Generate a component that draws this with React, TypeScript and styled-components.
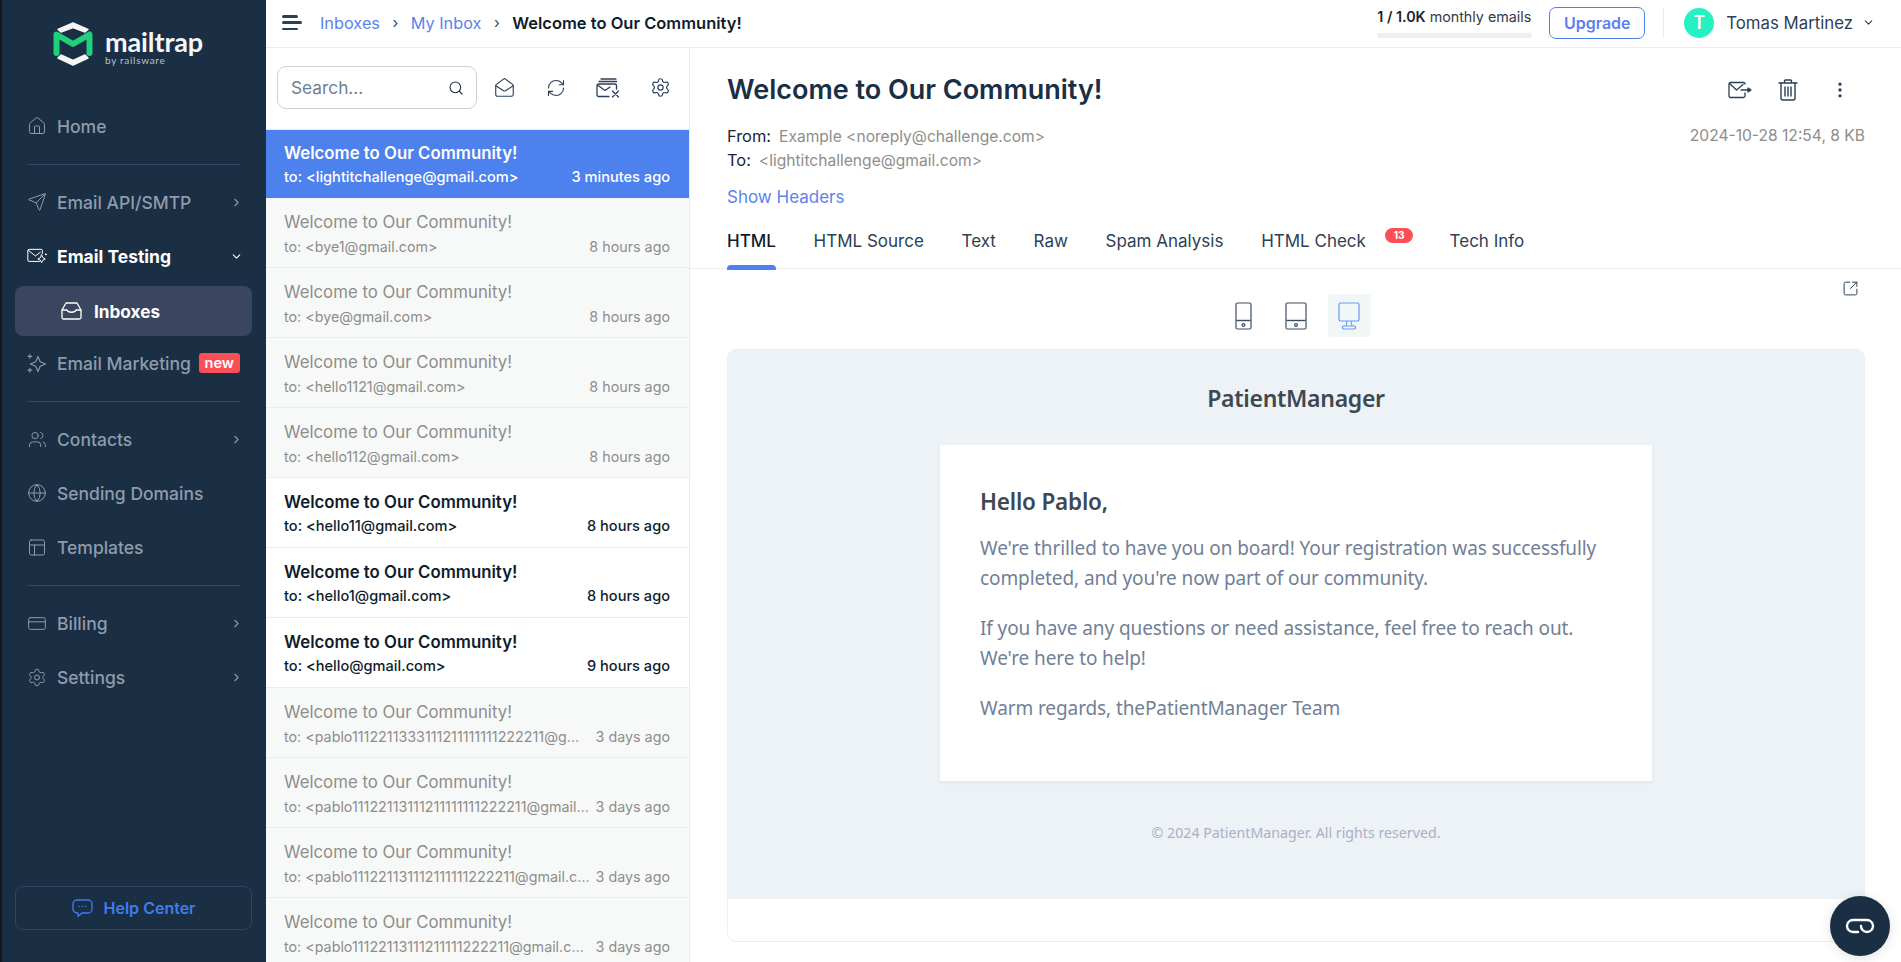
import React from "react";
import styled, { createGlobalStyle } from "styled-components";
import {
  ChevronDown,
  ChevronRight,
  CreditCard,
  EllipsisVertical,
  Globe,
  House,
  MailOpen,
  PanelsTopLeft,
  RefreshCw,
  Search,
  Send,
  Settings,
  SquareArrowOutUpRight,
  Users,
} from "lucide-react";

const GlobalStyle = createGlobalStyle`
  html, body {
    margin: 0;
    padding: 0;
    height: 100%;
    overflow: hidden;
  }
  body {
    font-family: Inter, "Liberation Sans", sans-serif;
    background: #fff;
  }
  * {
    box-sizing: border-box;
  }
`;

const Shell = styled.div`
  display: flex;
  width: 100%;
  height: 100vh;
  padding-left: 2px;
  background: #14181d;
  overflow: hidden;
`;

const Sidebar = styled.aside`
  width: 264px;
  flex: none;
  display: flex;
  flex-direction: column;
  background: #1a2e44;
`;

const LogoRow = styled.div`
  height: 99px;
  flex: none;
  display: flex;
  align-items: flex-start;
  padding: 21px 0 0 50px;
  gap: 11px;
`;

const LogoText = styled.div`
  display: flex;
  flex-direction: column;
  color: #f4f6f8;
  padding-top: 9px;
`;

const LogoName = styled.span`
  font-family: Lato, sans-serif;
  font-size: 27px;
  line-height: 24px;
  font-weight: 700;
  letter-spacing: -0.1px;
`;

const LogoBy = styled.span`
  font-family: Lato, sans-serif;
  font-size: 10px;
  line-height: 12px;
  letter-spacing: 0.7px;
  color: #b9c2cc;
`;

const NavItem = styled.div<{ $active?: boolean }>`
  height: 54px;
  flex: none;
  display: flex;
  align-items: center;
  padding: 0 23px 0 25px;
  font-size: 17.5px;
  font-weight: ${(p) => (p.$active ? 700 : 500)};
  color: ${(p) => (p.$active ? "#fff" : "#8f9cab")};
`;

const NavIcon = styled.span`
  width: 20px;
  margin-right: 10px;
  display: flex;
  align-items: center;
  justify-content: center;
  flex: none;
`;

const NavLabel = styled.span`
  flex: 1;
  white-space: nowrap;
`;

const NewBadge = styled.span`
  background: #fb4f55;
  color: #fff;
  font-size: 14.5px;
  font-weight: 600;
  line-height: 20px;
  height: 20px;
  padding: 0 6px;
  margin-right: 3px;
  border-radius: 3px;
`;

const SubItem = styled.div`
  height: 50px;
  flex: none;
  margin: 3px 14px 0 13px;
  background: #3a465f;
  border-radius: 8px;
  display: flex;
  align-items: center;
  padding-left: 46px;
  gap: 12px;
  color: #fff;
  font-size: 17.2px;
  font-weight: 700;
`;

const NavDivider = styled.div`
  height: 1px;
  flex: none;
  margin: 11px 26px 10px 25px;
  background: #36465e;
`;

const HelpButton = styled.div`
  margin: auto 14px 32px 13px;
  height: 44px;
  flex: none;
  border: 1px solid #33445c;
  border-radius: 8px;
  display: flex;
  align-items: center;
  justify-content: center;
  gap: 11px;
  color: #3f7cf0;
  font-size: 16px;
  font-weight: 600;
`;

const Main = styled.div`
  flex: 1;
  min-width: 0;
  display: flex;
  flex-direction: column;
  background: #fff;
`;

const TopBar = styled.header`
  height: 48px;
  flex: none;
  display: flex;
  align-items: center;
  border-bottom: 1px solid #ececec;
  padding: 0 0 2px 16px;
`;

const Burger = styled.div`
  width: 20px;
  height: 15px;
  display: flex;
  flex-direction: column;
  justify-content: space-between;
  margin-right: 18px;
  span {
    display: block;
    height: 2.5px;
    background: #2a3f57;
    border-radius: 2px;
  }
  span:nth-child(2) {
    width: 20px;
  }
  span:nth-child(1),
  span:nth-child(3) {
    width: 16px;
  }
`;

const Crumbs = styled.nav`
  display: flex;
  align-items: center;
  font-size: 16.3px;
  color: #5c82ee;
  flex: 1;
`;

const CrumbSep = styled.span`
  margin: 0 12.5px;
  color: #38495c;
  font-size: 15px;
`;

const CrumbCurrent = styled.span`
  font-size: 16.5px;
  font-weight: 600;
  color: #0f1c2c;
`;

const Quota = styled.div`
  width: 155px;
  margin: 0 17px 3px 0;
  display: flex;
  flex-direction: column;
  font-size: 14.3px;
  line-height: 20px;
  padding-top: 2px;
  white-space: nowrap;
  color: #333a45;
  b {
    font-weight: 600;
    color: #1a2330;
  }
`;

const QuotaBar = styled.div`
  width: 155px;
  height: 5px;
  margin-top: 6px;
  border-radius: 3px;
  background: #eeeeee;
`;

const UpgradeButton = styled.div`
  width: 96px;
  height: 32px;
  border: 1px solid #4d81ee;
  border-radius: 7px;
  display: flex;
  align-items: center;
  justify-content: center;
  color: #5c7ff0;
  font-size: 16px;
  font-weight: 600;
`;

const TopDivider = styled.div`
  width: 1px;
  height: 30px;
  margin: 0 20px 0 18px;
  background: #ececec;
`;

const Avatar = styled.div`
  width: 30px;
  height: 30px;
  border-radius: 50%;
  background: #24f1c4;
  color: #fff;
  font-size: 18px;
  font-weight: 600;
  display: flex;
  align-items: center;
  justify-content: center;
`;

const UserName = styled.span`
  margin: 0 9px 0 12px;
  font-size: 16.8px;
  color: #2c3f55;
  white-space: nowrap;
`;

const Body = styled.div`
  flex: 1;
  min-height: 0;
  display: flex;
`;

const ListPane = styled.section`
  width: 424px;
  flex: none;
  border-right: 1px solid #ececec;
  overflow: hidden;
`;

const ListTools = styled.div`
  height: 82px;
  display: flex;
  align-items: center;
  padding: 0 0 2px 11px;
  border-bottom: 1px solid #ececec;
`;

const SearchBox = styled.div`
  width: 200px;
  height: 43px;
  flex: none;
  margin-right: 1px;
  border: 1px solid #d0d3d6;
  border-radius: 9px;
  display: flex;
  align-items: center;
  justify-content: space-between;
  padding: 0 12px 0 13px;
  font-size: 17.3px;
  color: #6d7f92;
`;

const ToolButton = styled.div`
  width: 52px;
  display: flex;
  justify-content: center;
  align-items: center;
  color: #2a3f57;
`;

const MessageRow = styled.div<{ $state: "active" | "unread" | "read" }>`
  height: ${(p) => (p.$state === "active" ? "68px" : "70px")};
  padding: ${(p) => (p.$state === "active" ? "12px" : "13px")} 19px 0 18px;
  border-bottom: 1px solid ${(p) => (p.$state === "active" ? "#4d81ee" : "#ececec")};
  background: ${(p) =>
    p.$state === "active" ? "#4d81ee" : p.$state === "read" ? "#f7f9f9" : "#fff"};
  color: ${(p) =>
    p.$state === "active" ? "#fff" : p.$state === "read" ? "#8f8d8a" : "#0f1c2c"};
`;

const MessageSubject = styled.div<{ $bold: boolean }>`
  font-size: 16.8px;
  line-height: 23px;
  font-weight: ${(p) => (p.$bold ? 600 : 400)};
  white-space: nowrap;
`;

const MessageMeta = styled.div<{ $bold: boolean }>`
  display: flex;
  justify-content: space-between;
  gap: 6px;
  margin-top: ${(p) => (p.$bold ? "1px" : "2px")};
  font-size: ${(p) => (p.$bold ? "14.6px" : "14.3px")};
  line-height: 22px;
  font-weight: ${(p) => (p.$bold ? 500 : 400)};
`;

const MessageTo = styled.span`
  flex: 1;
  min-width: 0;
  overflow: hidden;
  white-space: nowrap;
  text-overflow: ellipsis;
`;

const MessageTime = styled.span`
  flex: none;
`;

const DetailPane = styled.section`
  flex: 1;
  min-width: 0;
  display: flex;
  flex-direction: column;
`;

const DetailHead = styled.div`
  padding: 25px 36px 0 37px;
`;

const TitleRow = styled.div`
  display: flex;
  justify-content: space-between;
  align-items: center;
  height: 34px;
`;

const Title = styled.h1`
  margin: 0;
  font-size: 27px;
  line-height: 34px;
  font-weight: 600;
  color: #1a2e44;
`;

const TitleActions = styled.div`
  display: flex;
  align-items: center;
  color: #2a3f57;
  margin-right: 15px;
  gap: 26px;
  svg:nth-child(2) {
    margin-right: 6px;
  }
`;

const MetaRows = styled.div`
  display: flex;
  justify-content: space-between;
  margin-top: 17px;
  font-size: 16.4px;
  line-height: 24px;
  color: #1b2530;
`;

const MetaLine = styled.div`
  height: 24px;
  display: flex;
  align-items: baseline;
  gap: 8px;
`;

const MetaValue = styled.span`
  color: #8f8d8a;
  font-size: 15.6px;
`;

const MetaDate = styled.span`
  color: #8f8d8a;
  font-size: 15.6px;
`;

const ShowHeaders = styled.div`
  margin-top: 13px;
  font-size: 17px;
  line-height: 24px;
  color: #5c82ee;
`;

const Tabs = styled.div`
  display: flex;
  gap: 37.7px;
  height: 60px;
  padding: 0 0 0 37px;
  border-bottom: 1px solid #ececec;
  flex: none;
`;

const Tab = styled.div<{ $active?: boolean; $badged?: boolean }>`
  position: relative;
  height: 60px;
  padding-top: 20px;
  margin-right: ${(p) => (p.$badged ? "46px" : "0")};
  font-size: 17px;
  line-height: 24px;
  font-weight: ${(p) => (p.$active ? 500 : 400)};
  color: ${(p) => (p.$active ? "#0f1c2c" : "#2c3f55")};
  white-space: nowrap;
  &::after {
    content: "";
    display: ${(p) => (p.$active ? "block" : "none")};
    position: absolute;
    left: 0;
    right: 0;
    bottom: -1px;
    height: 5px;
    border-radius: 4px 4px 0 0;
    background: #4d81ee;
  }
`;

const CountBadge = styled.span`
  position: absolute;
  left: 124px;
  top: 19px;
  width: 28px;
  height: 15px;
  border-radius: 8px;
  background: #fb4f55;
  color: #fff;
  font-size: 10px;
  line-height: 15px;
  font-weight: 700;
  text-align: center;
`;

const PreviewArea = styled.div`
  flex: 1;
  min-height: 0;
  position: relative;
  padding: 25px 36px 20px 37px;
  display: flex;
  flex-direction: column;
`;

const OpenLink = styled.div`
  position: absolute;
  right: 42px;
  top: 11px;
  color: #2a3f57;
`;

const DeviceBar = styled.div`
  height: 43px;
  flex: none;
  margin-bottom: 12px;
  display: flex;
  justify-content: center;
  gap: 10px;
`;

const DeviceButton = styled.div<{ $active?: boolean }>`
  width: 43px;
  height: 43px;
  border-radius: 4px;
  display: flex;
  align-items: center;
  justify-content: center;
  background: ${(p) => (p.$active ? "#f1f6f7" : "transparent")};
  color: ${(p) => (p.$active ? "#6b98f5" : "#3a4c62")};
`;

const PreviewFrame = styled.div`
  flex: 1;
  border: 1px solid #eeeeee;
  border-radius: 9px;
  overflow: hidden;
  display: flex;
  flex-direction: column;
`;

const EmailCanvas = styled.div`
  height: 549px;
  flex: none;
  background: #edf2f7;
  display: flex;
  flex-direction: column;
  align-items: center;
  font-family: "Noto Sans", "Open Sans", sans-serif;
`;

const Brand = styled.div`
  height: 95px;
  flex: none;
  display: flex;
  align-items: center;
  font-size: 23px;
  font-weight: 600;
  color: #3d4852;
  letter-spacing: -0.3px;
`;

const EmailCard = styled.div`
  width: 712px;
  height: 336px;
  flex: none;
  background: #fff;
  padding: 45px 40px 0;
  box-shadow: 0 2px 4px rgba(0, 0, 50, 0.05);
`;

const Greeting = styled.h2`
  margin: 0 0 19px;
  font-size: 22.5px;
  line-height: 24px;
  font-weight: 600;
  color: #3d4852;
  letter-spacing: -0.2px;
`;

const Paragraph = styled.p`
  margin: 0 0 20px;
  font-size: 19px;
  line-height: 30px;
  color: #718096;
  letter-spacing: -0.1px;
`;

const EmailFooter = styled.div`
  margin-top: 42px;
  font-size: 14.2px;
  color: #b0adc5;
`;

const LinkFab = styled.div`
  position: fixed;
  left: 1830px;
  top: 896px;
  width: 60px;
  height: 60px;
  border-radius: 50%;
  background: #1a2e44;
  display: flex;
  align-items: center;
  justify-content: center;
  box-shadow: 0 2px 12px rgba(0, 0, 0, 0.12);
`;

const MailLogo = () => (
  <svg width="42" height="46" viewBox="0 0 42 46">
    <path d="M6 8.5 L21 2 L36 8.5 L33 11 L21 6.5 L9 11Z" fill="#f5f5f5" stroke="#f5f5f5" strokeWidth="1.5" strokeLinejoin="round" />
    <path d="M6 37 L21 44 L36 37 L33 34 L21 39.5 L9 34Z" fill="#f5f5f5" stroke="#f5f5f5" strokeWidth="1.5" strokeLinejoin="round" />
    <path d="M4.5 32 V13.5 L21 23 L37.5 13.5 V32" fill="none" stroke="#21d07a" strokeWidth="6" strokeLinejoin="round" strokeLinecap="round" />
  </svg>
);

const TestingIcon = () => (
  <svg width="24" height="18" viewBox="0 0 24 18" fill="none" stroke="#fff" strokeWidth="1.2" strokeLinecap="round" strokeLinejoin="round">
    <path d="M15 15.5 H2.5 a1.5 1.5 0 0 1-1.5-1.5 V2.5 A1.5 1.5 0 0 1 2.5 1 H17 a1.5 1.5 0 0 1 1.5 1.5 V6" />
    <path d="M1.5 2 L10 9 L16 4.5" />
    <path d="M17.5 7.5 L19 11 L22 12.5 L19 14 L17.5 17 L16 14 L13 12.5 L16 11Z" />
    <circle cx="22.5" cy="7" r="0.6" fill="#fff" />
  </svg>
);

const InboxIcon = () => (
  <svg width="21" height="18" viewBox="0 0 21 18" fill="none" stroke="#fff" strokeWidth="1.3" strokeLinecap="round" strokeLinejoin="round">
    <path d="M1 8 L5 1 H16 L20 8 V15.5 A1.5 1.5 0 0 1 18.5 17 H2.5 A1.5 1.5 0 0 1 1 15.5Z" />
    <path d="M1 8 H6 C7 11 14 11 15 8 H20" />
  </svg>
);

const MarketingIcon = () => (
  <svg width="21" height="21" viewBox="0 0 21 21" fill="none" stroke="#8f9cab" strokeWidth="1.2" strokeLinejoin="round">
    <path d="M11.5 3 L13.8 8.7 L19.5 11 L13.8 13.3 L11.5 19 L9.2 13.3 L3.5 11 L9.2 8.7Z" />
    <path d="M3 1 V5 M1 3 H5 M3 15.5 V19.5 M1 17.5 H5" strokeLinecap="round" />
  </svg>
);

const HelpIcon = () => (
  <svg width="21" height="19" viewBox="0 0 21 19" fill="none" stroke="#3f7cf0" strokeWidth="1.3" strokeLinecap="round" strokeLinejoin="round">
    <path d="M5 1 H16 A4 4 0 0 1 20 5 V10 A4 4 0 0 1 16 14 H10 L6 17.5 V14 H5 A4 4 0 0 1 1 10 V5 A4 4 0 0 1 5 1Z" />
    <path d="M7 7.5 H7.01 M10.5 7.5 H10.51 M14 7.5 H14.01" strokeWidth="1.6" />
  </svg>
);

const MailStackIcon = () => (
  <svg width="24" height="20" viewBox="0 0 24 20" fill="none" stroke="#2a3f57" strokeWidth="1.3" strokeLinecap="round" strokeLinejoin="round">
    <path d="M13 18.5 H2.5 A1.5 1.5 0 0 1 1 17 V7.5 A1.5 1.5 0 0 1 2.5 6 H19 A1.5 1.5 0 0 1 20.5 7.5 V11" />
    <path d="M1.5 7 L9 12.5 L14 9" />
    <path d="M3 3.5 H20.5 M5 1 H20" />
    <path d="M16.5 13 L22.5 19 M22.5 13 L16.5 19" />
  </svg>
);

const ForwardMailIcon = () => (
  <svg width="24" height="18" viewBox="0 0 24 18" fill="none" stroke="#2a3f57" strokeWidth="1.3" strokeLinecap="round" strokeLinejoin="round">
    <path d="M17 12 V15 A1.5 1.5 0 0 1 15.5 16.5 H2.5 A1.5 1.5 0 0 1 1 15 V3 A1.5 1.5 0 0 1 2.5 1.5 H15.5 A1.5 1.5 0 0 1 17 3" />
    <path d="M1.5 2.5 L8.5 9 L15 3.5" />
    <path d="M13 9 H22.5" />
    <path d="M20 7 L23 9 L20 11Z" fill="#2a3f57" />
  </svg>
);

const TrashIcon = () => (
  <svg width="20" height="22" viewBox="0 0 20 22" fill="none" stroke="#2a3f57" strokeWidth="1.4" strokeLinecap="round" strokeLinejoin="round">
    <path d="M1 4 H19 M6.5 4 V2 A1 1 0 0 1 7.5 1 H12.5 A1 1 0 0 1 13.5 2 V4" />
    <path d="M3 4 V19 A2 2 0 0 0 5 21 H15 A2 2 0 0 0 17 19 V4" />
    <path d="M7 8 V17 M10 8 V17 M13 8 V17" />
  </svg>
);

const PhoneIcon = () => (
  <svg width="17" height="28" viewBox="0 0 17 28" fill="none" stroke="currentColor" strokeWidth="1.2">
    <rect x="1" y="1" width="15" height="26" rx="1.5" />
    <path d="M1.5 18.5 H15.5" strokeWidth="1.4" />
    <circle cx="8.5" cy="23" r="1.4" />
  </svg>
);

const TabletIcon = () => (
  <svg width="22" height="28" viewBox="0 0 22 28" fill="none" stroke="currentColor" strokeWidth="1.2">
    <rect x="1" y="1" width="20" height="26" rx="1.5" />
    <path d="M1.5 18.5 H20.5" strokeWidth="1.4" />
    <circle cx="11" cy="23" r="1.4" />
  </svg>
);

const DesktopIcon = () => (
  <svg width="22" height="28" viewBox="0 0 22 28" fill="none" stroke="currentColor" strokeWidth="1.2">
    <rect x="1" y="1" width="20" height="18" rx="1.5" />
    <path d="M9 19 L8 24 M13 19 L14 24" />
    <rect x="4.5" y="24" width="13" height="3" rx="1" />
  </svg>
);

const LinkGlyph = () => (
  <svg width="30" height="16" viewBox="0 0 30 16" fill="none" stroke="#fff" strokeWidth="2.4" strokeLinecap="round">
    <path d="M13 14 H8 A6 6 0 0 1 8 2 H22 A6 6 0 1 1 16 8" />
  </svg>
);

const messages = [
  { to: "<lightitchallenge@gmail.com>", time: "3 minutes ago", state: "active" },
  { to: "<bye1@gmail.com>", time: "8 hours ago", state: "read" },
  { to: "<bye@gmail.com>", time: "8 hours ago", state: "read" },
  { to: "<hello1121@gmail.com>", time: "8 hours ago", state: "read" },
  { to: "<hello112@gmail.com>", time: "8 hours ago", state: "read" },
  { to: "<hello11@gmail.com>", time: "8 hours ago", state: "unread" },
  { to: "<hello1@gmail.com>", time: "8 hours ago", state: "unread" },
  { to: "<hello@gmail.com>", time: "9 hours ago", state: "unread" },
  { to: "<pablo1112211333111211111111222211@gmail.com>", time: "3 days ago", state: "read" },
  { to: "<pablo11122113111211111111222211@gmail.com>", time: "3 days ago", state: "read" },
  { to: "<pablo111221131112111111222211@gmail.com>", time: "3 days ago", state: "read" },
  { to: "<pablo11122113111211111222211@gmail.com>", time: "3 days ago", state: "read" },
] as const;

const navColor = "#8f9cab";

const App = () => {
  return (
    <Shell>
      <GlobalStyle />
      <Sidebar>
        <LogoRow>
          <MailLogo />
          <LogoText>
            <LogoName>mailtrap</LogoName>
            <LogoBy>by railsware</LogoBy>
          </LogoText>
        </LogoRow>
        <NavItem>
          <NavIcon><House size={20} strokeWidth={1.2} color={navColor} /></NavIcon>
          <NavLabel>Home</NavLabel>
        </NavItem>
        <NavDivider />
        <NavItem>
          <NavIcon><Send size={20} strokeWidth={1.2} color={navColor} /></NavIcon>
          <NavLabel>Email API/SMTP</NavLabel>
          <ChevronRight size={13} color={navColor} />
        </NavItem>
        <NavItem $active>
          <NavIcon><TestingIcon /></NavIcon>
          <NavLabel>Email Testing</NavLabel>
          <ChevronDown size={13} color="#fff" />
        </NavItem>
        <SubItem>
          <InboxIcon />
          Inboxes
        </SubItem>
        <NavItem>
          <NavIcon><MarketingIcon /></NavIcon>
          <NavLabel>Email Marketing</NavLabel>
          <NewBadge>new</NewBadge>
        </NavItem>
        <NavDivider />
        <NavItem>
          <NavIcon><Users size={19} strokeWidth={1.2} color={navColor} /></NavIcon>
          <NavLabel>Contacts</NavLabel>
          <ChevronRight size={13} color={navColor} />
        </NavItem>
        <NavItem>
          <NavIcon><Globe size={20} strokeWidth={1.2} color={navColor} /></NavIcon>
          <NavLabel>Sending Domains</NavLabel>
        </NavItem>
        <NavItem>
          <NavIcon><PanelsTopLeft size={21} strokeWidth={1.2} color={navColor} /></NavIcon>
          <NavLabel>Templates</NavLabel>
        </NavItem>
        <NavDivider />
        <NavItem>
          <NavIcon><CreditCard size={21} strokeWidth={1.2} color={navColor} /></NavIcon>
          <NavLabel>Billing</NavLabel>
          <ChevronRight size={13} color={navColor} />
        </NavItem>
        <NavItem>
          <NavIcon><Settings size={21} strokeWidth={1.2} color={navColor} /></NavIcon>
          <NavLabel>Settings</NavLabel>
          <ChevronRight size={13} color={navColor} />
        </NavItem>
        <HelpButton>
          <HelpIcon />
          Help Center
        </HelpButton>
      </Sidebar>
      <Main>
        <TopBar>
          <Burger><span /><span /><span /></Burger>
          <Crumbs>
            Inboxes
            <CrumbSep>›</CrumbSep>
            My Inbox
            <CrumbSep>›</CrumbSep>
            <CrumbCurrent>Welcome to Our Community!</CrumbCurrent>
          </Crumbs>
          <Quota>
            <span><b>1 / 1.0K</b> monthly emails</span>
            <QuotaBar />
          </Quota>
          <UpgradeButton>Upgrade</UpgradeButton>
          <TopDivider />
          <Avatar>T</Avatar>
          <UserName>Tomas Martinez</UserName>
          <ChevronDown size={13} color="#2c3f55" style={{ marginRight: 26 }} />
        </TopBar>
        <Body>
          <ListPane>
            <ListTools>
              <SearchBox>
                Search...
                <Search size={16} color="#1a2e44" strokeWidth={1.6} />
              </SearchBox>
              <ToolButton><MailOpen size={21} strokeWidth={1.3} /></ToolButton>
              <ToolButton><RefreshCw size={20} strokeWidth={1.3} /></ToolButton>
              <ToolButton><MailStackIcon /></ToolButton>
              <ToolButton><Settings size={21} strokeWidth={1.3} /></ToolButton>
            </ListTools>
            {messages.map((m) => (
              <MessageRow key={m.to} $state={m.state}>
                <MessageSubject $bold={m.state !== "read"}>Welcome to Our Community!</MessageSubject>
                <MessageMeta $bold={m.state !== "read"}>
                  <MessageTo>to: {m.to}</MessageTo>
                  <MessageTime>{m.time}</MessageTime>
                </MessageMeta>
              </MessageRow>
            ))}
          </ListPane>
          <DetailPane>
            <DetailHead>
              <TitleRow>
                <Title>Welcome to Our Community!</Title>
                <TitleActions>
                  <ForwardMailIcon />
                  <TrashIcon />
                  <EllipsisVertical size={20} strokeWidth={2} />
                </TitleActions>
              </TitleRow>
              <MetaRows>
                <div>
                  <MetaLine>From: <MetaValue>Example &lt;noreply@challenge.com&gt;</MetaValue></MetaLine>
                  <MetaLine>To: <MetaValue>&lt;lightitchallenge@gmail.com&gt;</MetaValue></MetaLine>
                </div>
                <MetaDate>2024-10-28 12:54, 8 KB</MetaDate>
              </MetaRows>
              <ShowHeaders>Show Headers</ShowHeaders>
            </DetailHead>
            <Tabs>
              <Tab $active>HTML</Tab>
              <Tab>HTML Source</Tab>
              <Tab>Text</Tab>
              <Tab>Raw</Tab>
              <Tab>Spam Analysis</Tab>
              <Tab $badged>HTML Check<CountBadge>13</CountBadge></Tab>
              <Tab>Tech Info</Tab>
            </Tabs>
            <PreviewArea>
              <OpenLink><SquareArrowOutUpRight size={17} strokeWidth={1.4} /></OpenLink>
              <DeviceBar>
                <DeviceButton><PhoneIcon /></DeviceButton>
                <DeviceButton><TabletIcon /></DeviceButton>
                <DeviceButton $active><DesktopIcon /></DeviceButton>
              </DeviceBar>
              <PreviewFrame>
                <EmailCanvas>
                  <Brand>PatientManager</Brand>
                  <EmailCard>
                    <Greeting>Hello Pablo,</Greeting>
                    <Paragraph>We're thrilled to have you on board! Your registration was successfully completed, and you're now part of our community.</Paragraph>
                    <Paragraph>If you have any questions or need assistance, feel free to reach out. We're here to help!</Paragraph>
                    <Paragraph>Warm regards, thePatientManager Team</Paragraph>
                  </EmailCard>
                  <EmailFooter>© 2024 PatientManager. All rights reserved.</EmailFooter>
                </EmailCanvas>
              </PreviewFrame>
            </PreviewArea>
          </DetailPane>
        </Body>
      </Main>
      <LinkFab><LinkGlyph /></LinkFab>
    </Shell>
  );
};

export default App;
